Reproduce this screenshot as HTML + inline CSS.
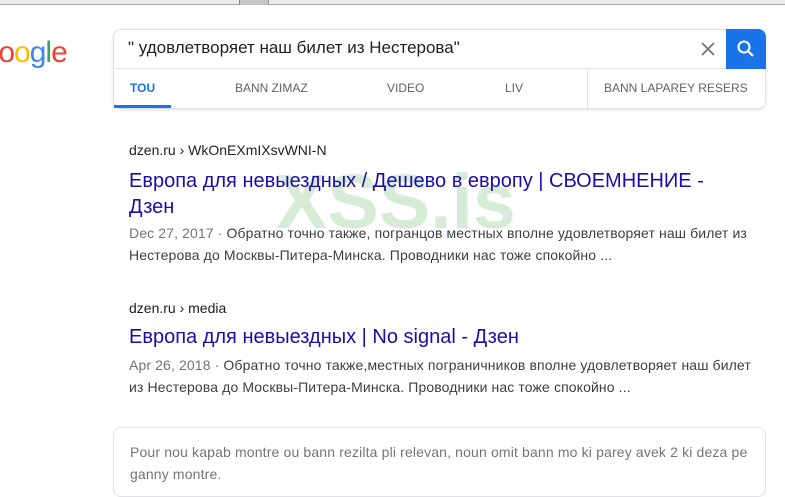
<!DOCTYPE html>
<html><head><meta charset="utf-8"><style>
*{margin:0;padding:0;box-sizing:border-box}
body{width:785px;height:478px;overflow:hidden;background:#fff;position:relative;font-family:"Liberation Sans",sans-serif}
.a{position:absolute;white-space:nowrap}
.url{font-size:14px;color:#202124}
.t{font-size:20px;color:#1a0dab}
.s{font-size:14px;color:#3c4043;letter-spacing:.12px}
.d{color:#70757a}
.tab{font-size:12px;color:#5f6368}
</style></head><body>
<div class="a" style="left:0;top:0;width:785px;height:5px;background:#ececec;border-bottom:1px solid #a8a8a8"></div>
<div class="a" style="left:239px;top:0;width:30px;height:5px;background:#c8c6c2;border-left:1px solid #888;border-right:1px solid #999"></div>
<div class="a" style="left:-24px;top:36px;font-size:30px;letter-spacing:-1px;font-weight:normal"><span style="color:#4285f4">G</span><span style="color:#ea4335">o</span><span style="color:#fbbc05">o</span><span style="color:#4285f4">g</span><span style="color:#34a853">l</span><span style="color:#ea4335">e</span></div>
<div class="a" style="left:113px;top:29px;width:653px;height:80px;border:1px solid #dfe1e5;border-radius:8px;box-shadow:0 1px 3px rgba(0,0,0,.12)"></div>
<div class="a" style="left:113px;top:68px;width:653px;height:1px;background:#dfe1e5"></div>
<div class="a" style="left:587px;top:69px;width:1px;height:39px;background:#dfe1e5"></div>
<div class="a" style="left:726px;top:29px;width:40px;height:40px;background:#1a73e8;border-radius:0 8px 0 0"></div>
<svg class="a" style="left:734px;top:37px" width="24" height="24" viewBox="0 0 24 24"><circle cx="10" cy="10" r="5.5" fill="none" stroke="#fff" stroke-width="2"/><path d="M14 14l5 5" stroke="#fff" stroke-width="2.2"/></svg>
<svg class="a" style="left:701px;top:42px" width="14" height="14" viewBox="0 0 14 14"><path d="M1 1l12 12M13 1L1 13" stroke="#70757a" stroke-width="1.8"/></svg>
<div class="a" style="left:128px;top:38px;font-size:17px;color:#202124">" удовлетворяет наш билет из Нестерова"</div>
<div class="a tab" style="left:130px;top:81px;color:#1a73e8;font-weight:bold">TOU</div>
<div class="a" style="left:114px;top:105px;width:57px;height:3px;background:#1a73e8"></div>
<div class="a tab" style="left:235px;top:81px">BANN ZIMAZ</div>
<div class="a tab" style="left:387px;top:81px">VIDEO</div>
<div class="a tab" style="left:505px;top:81px">LIV</div>
<div class="a tab" style="left:604px;top:81px">BANN LAPAREY RESERS</div>
<div class="a" style="left:276px;top:158px;font-size:77px;font-weight:bold;color:#cfe9cf;opacity:.85">XSS.is</div>
<div class="a url" style="left:129px;top:142px">dzen.ru › WkOnEXmIXsvWNI-N</div>
<div class="a t" style="left:129px;top:168px;line-height:26px;white-space:normal;width:600px">Европа для невыездных / Дешево в европу | СВОЕМНЕНИЕ - Дзен</div>
<div class="a s" style="left:129px;top:222px;line-height:22px;white-space:normal;width:630px"><span class="d">Dec 27, 2017 · </span>Обратно точно также, погранцов местных вполне удовлетворяет наш билет из Нестерова до Москвы-Питера-Минска. Проводники нас тоже спокойно ...</div>
<div class="a url" style="left:129px;top:300px">dzen.ru › media</div>
<div class="a t" style="left:129px;top:324px;line-height:26px">Европа для невыездных | No signal - Дзен</div>
<div class="a s" style="left:129px;top:354px;line-height:22px;white-space:normal;width:625px"><span class="d">Apr 26, 2018 · </span>Обратно точно также,местных пограничников вполне удовлетворяет наш билет из Нестерова до Москвы-Питера-Минска. Проводники нас тоже спокойно ...</div>
<div class="a" style="left:113px;top:427px;width:653px;height:70px;border:1px solid #dfe1e5;border-radius:8px"></div>
<div class="a" style="left:130px;top:441px;width:625px;white-space:normal;font-size:14px;line-height:22px;color:#70757a;letter-spacing:.15px">Pour nou kapab montre ou bann rezilta pli relevan, noun omit bann mo ki parey avek 2 ki deza pe ganny montre.</div>
</body></html>
